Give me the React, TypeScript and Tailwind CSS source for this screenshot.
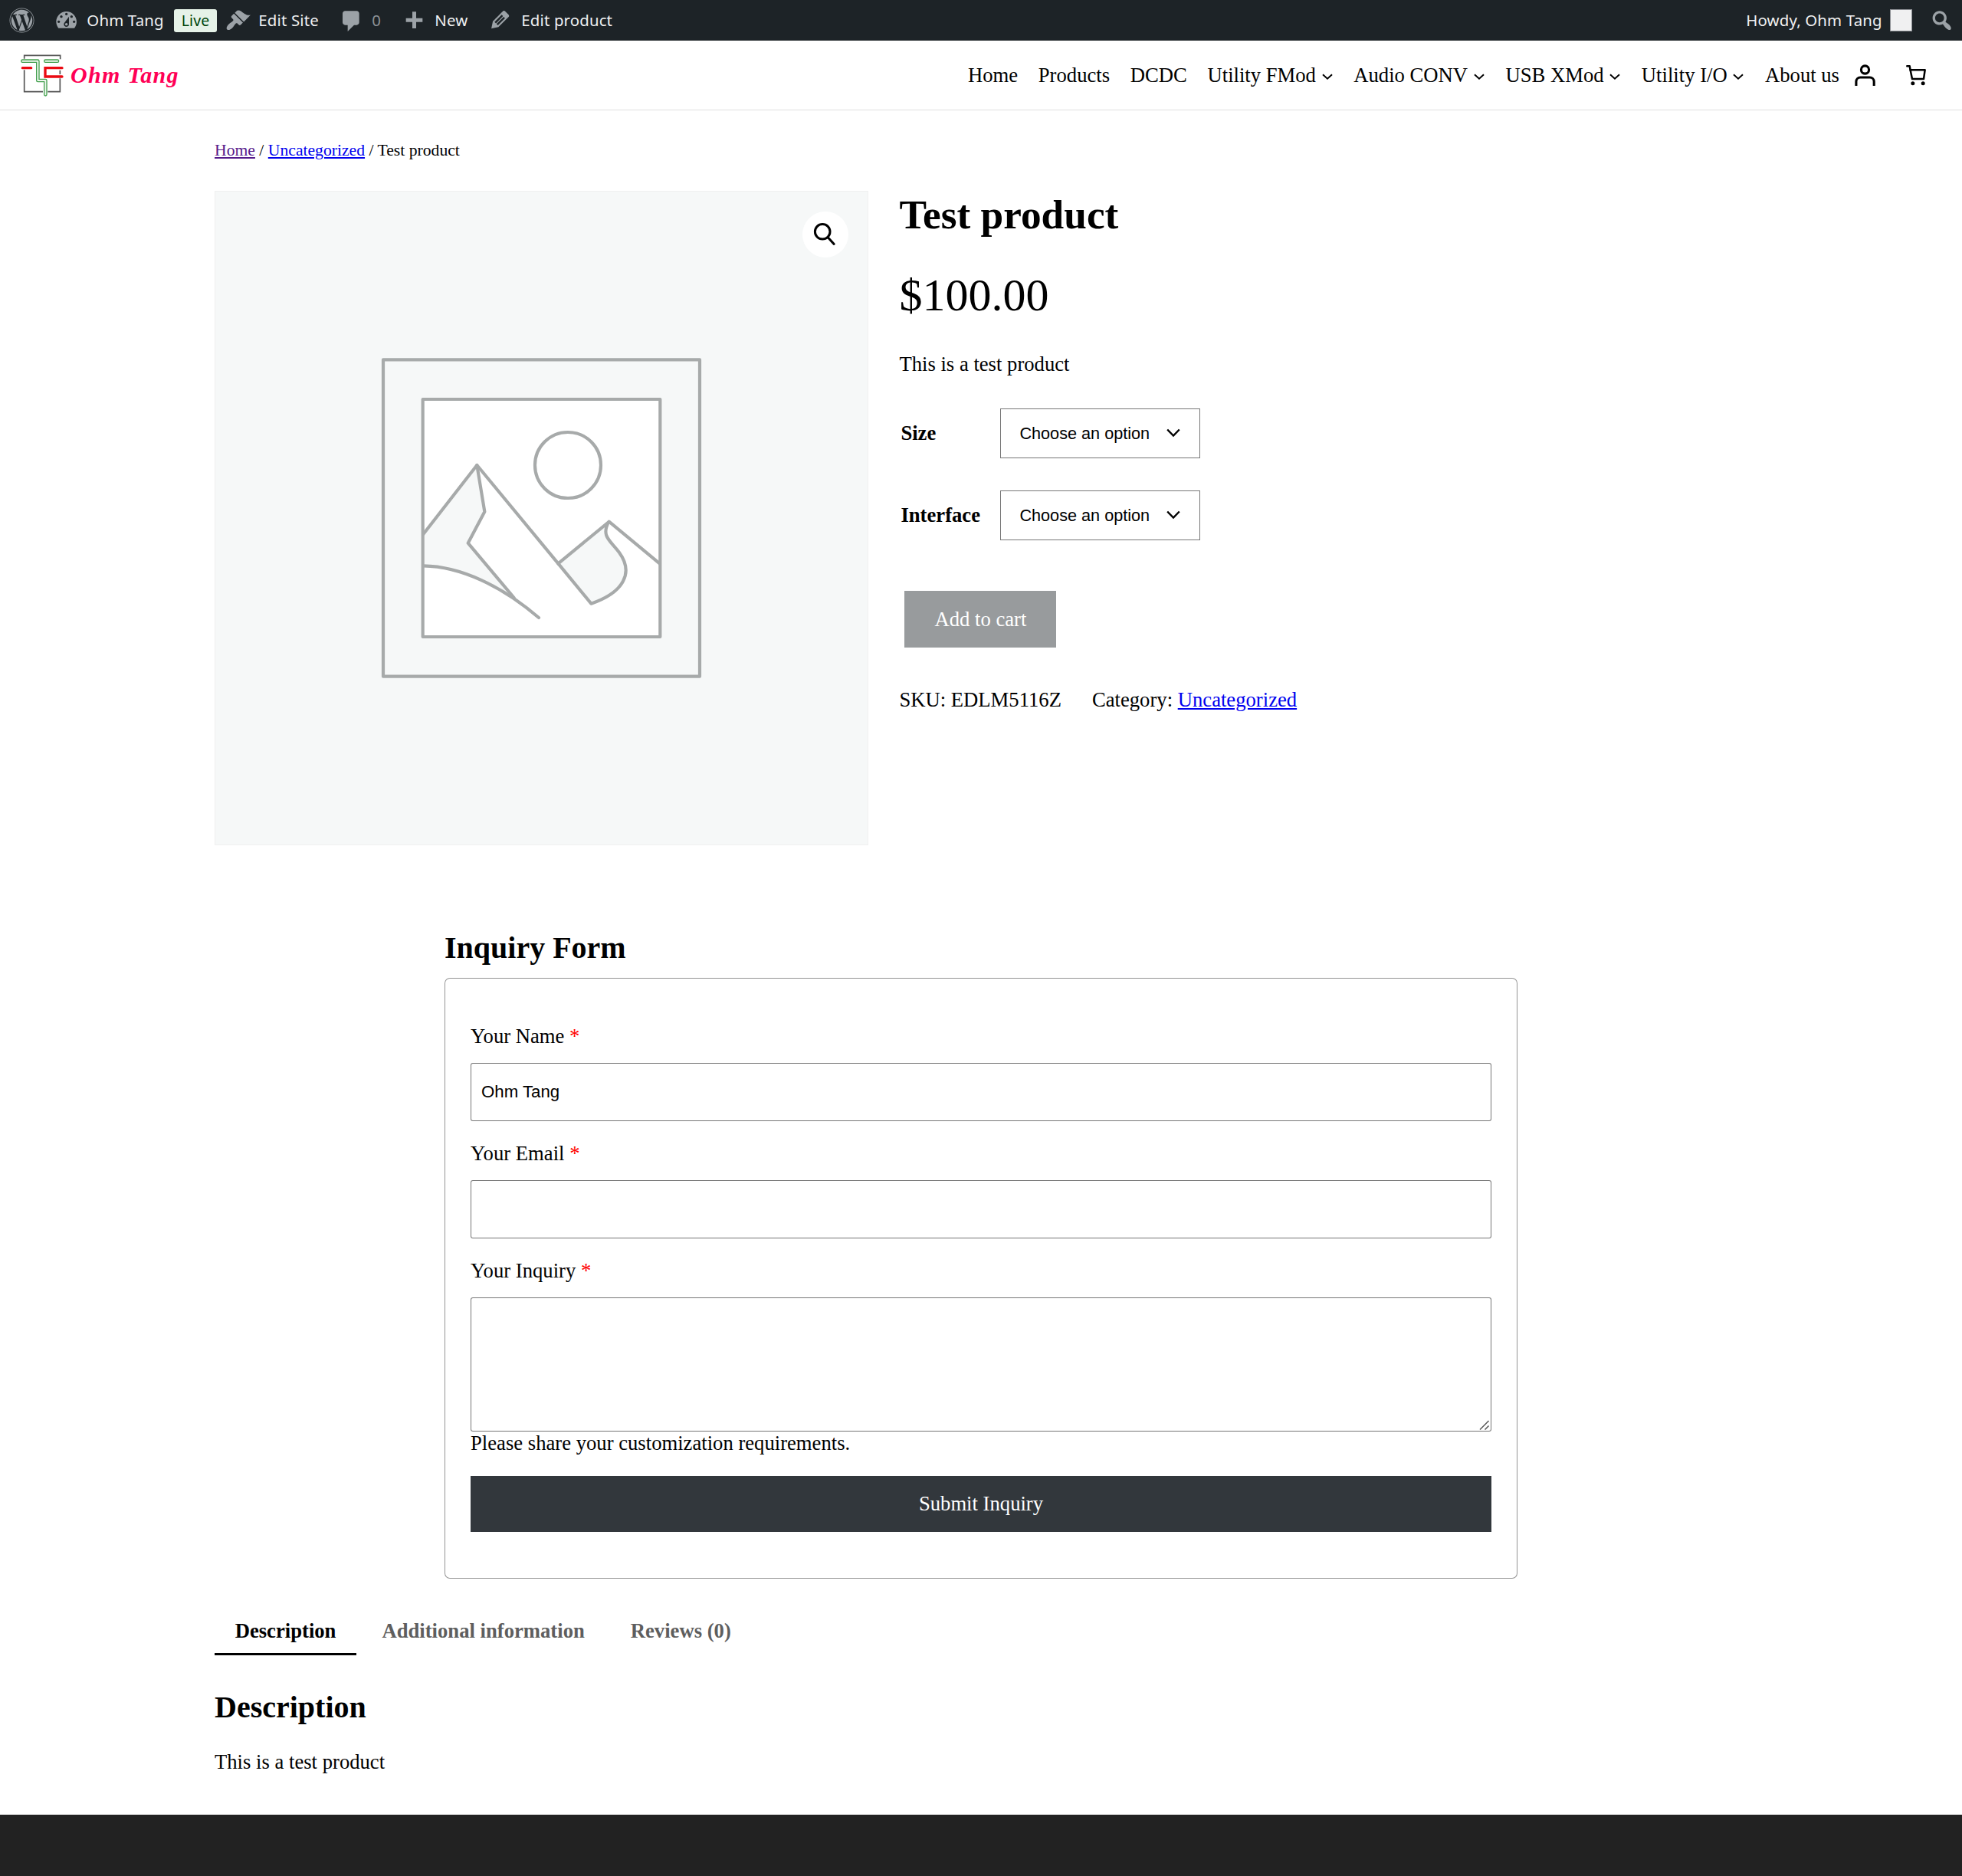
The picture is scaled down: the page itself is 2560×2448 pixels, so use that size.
import React from "react";
import { FaWordpress } from "react-icons/fa";

interface NavItem {
  label: string;
  hasMenu?: boolean;
}

const navItems: NavItem[] = [
  { label: "Home" },
  { label: "Products" },
  { label: "DCDC" },
  { label: "Utility FMod", hasMenu: true },
  { label: "Audio CONV", hasMenu: true },
  { label: "USB XMod", hasMenu: true },
  { label: "Utility I/O", hasMenu: true },
  { label: "About us" },
];

const options = ["Size", "Interface"];

const icons = {
  dashboard:
    "M3.76 16h12.48c1.1-1.37 1.76-3.11 1.76-5 0-4.42-3.58-8-8-8s-8 3.58-8 8c0 1.89.66 3.63 1.76 5zM10 4c.55 0 1 .45 1 1s-.45 1-1 1-1-.45-1-1 .45-1 1-1zM6 6c.55 0 1 .45 1 1s-.45 1-1 1-1-.45-1-1 .45-1 1-1zm8 0c.55 0 1 .45 1 1s-.45 1-1 1-1-.45-1-1 .45-1 1-1zm-5.37 5.55L12 7v6c0 1.1-.9 2-2 2s-2-.9-2-2c0-.57.24-1.08.63-1.45zM4 10c.55 0 1 .45 1 1s-.45 1-1 1-1-.45-1-1 .45-1 1-1zm12 0c.55 0 1 .45 1 1s-.45 1-1 1-1-.45-1-1 .45-1 1-1zm-5 3c0-.55-.45-1-1-1s-1 .45-1 1 .45 1 1 1 1-.45 1-1z",
  brush:
    "M14.48 11.06L7.41 3.99l1.5-1.5c.5-.56 2.3-.47 3.51.32 1.21.8 1.43 1.28 2.91 2.1 1.18.64 2.45 1.26 4.45.85zm-.71.71L6.7 4.7 4.93 6.47c-.39.39-.39 1.02 0 1.41l1.06 1.06c.39.39.39 1.03 0 1.42-.6.6-1.43 1.11-2.21 1.69-.35.26-.7.53-1.01.84C1.43 14.23.4 16.08 1.4 17.07c.99 1 2.84-.03 4.18-1.36.31-.31.58-.66.85-1.02.57-.78 1.08-1.61 1.69-2.21.39-.39 1.02-.39 1.41 0l1.06 1.06c.39.39 1.02.39 1.41 0z",
  comment:
    "M5 2h9c1.1 0 2 .9 2 2v7c0 1.1-.9 2-2 2h-2l-5 5v-5H5c-1.1 0-2-.9-2-2V4c0-1.1.9-2 2-2z",
  plus: "M17 7v3h-5v5H9v-5H4V7h5V2h3v5z",
  pencil:
    "M13.89 3.39l2.71 2.72c.46.46.42 1.24.03 1.64l-8.01 8.02-5.56 1.16 1.16-5.58s7.6-7.63 7.99-8.03c.39-.39 1.22-.39 1.68.07zm-2.73 2.79l-5.59 5.61 1.11 1.11 5.54-5.65zm-2.97 8.23l5.58-5.6-1.07-1.08-5.59 5.6z",
  search:
    "M12.14 4.18c1.87 1.87 2.11 4.75.72 6.89.12.1.22.21.36.31.2.16.47.36.81.59.34.24.56.39.66.47.42.31.73.57.94.78.32.32.6.65.84 1 .25.35.44.69.59 1.04.14.35.21.68.18 1-.02.32-.14.59-.36.81s-.49.34-.81.36c-.31.02-.65-.04-.99-.19-.35-.14-.7-.34-1.04-.59-.35-.24-.68-.52-1-.84-.21-.21-.47-.52-.77-.93-.1-.13-.25-.35-.47-.66-.22-.32-.4-.57-.56-.78-.16-.2-.29-.35-.44-.5-2.07 1.09-4.69.76-6.44-.98-2.14-2.15-2.14-5.64 0-7.78 2.15-2.15 5.63-2.15 7.78 0zm-1.41 6.36c1.36-1.37 1.36-3.58 0-4.95-1.37-1.37-3.59-1.37-4.95 0-1.37 1.37-1.37 3.58 0 4.95 1.36 1.37 3.58 1.37 4.95 0z",
};

const AdminIcon: React.FC<{ d: string; className?: string }> = ({
  d,
  className = "",
}) => (
  <svg
    viewBox="0 0 20 20"
    className={`w-[33.33px] h-[33.33px] shrink-0 fill-[#9ca2a7] ${className}`}
  >
    <path d={d} fillRule="evenodd" />
  </svg>
);

const AdminBar: React.FC = () => (
  <div className="h-[53px] bg-[#1d2327] text-[#f0f0f1] font-['Noto_Sans',sans-serif] text-[20.4px] tracking-[0.15px] leading-[53px] flex justify-between whitespace-nowrap">
    <div className="flex items-center">
      <FaWordpress className="ml-[12px] w-[33px] h-[33px] text-[#9ca2a7] shrink-0" />
      <div className="flex items-center ml-[25px] w-[213px]">
        <AdminIcon d={icons.dashboard} />
        <span className="ml-[10px] w-[114px]">Ohm Tang</span>
        <span className="w-[56px] h-[30px] leading-[29px] rounded-[3px] bg-[#e6f2e8] text-[#00450c] text-[19.5px] text-center">
          Live
        </span>
      </div>
      <div className="flex items-center ml-[11px] w-[148px]">
        <AdminIcon d={icons.brush} />
        <span className="ml-[10px]">Edit Site</span>
      </div>
      <div className="flex items-center w-[81px]">
        <AdminIcon d={icons.comment} className="mt-[3px]" />
        <span className="ml-[10px] text-[#8c9196]">0</span>
      </div>
      <div className="flex items-center w-[113px]">
        <AdminIcon d={icons.plus} className="mt-[4px]" />
        <span className="ml-[11px]">New</span>
      </div>
      <div className="flex items-center">
        <AdminIcon d={icons.pencil} className="-mt-[2px]" />
        <span className="ml-[11px]">Edit product</span>
      </div>
    </div>
    <div className="flex items-center pr-[10px]">
      <span>Howdy, Ohm Tang</span>
      <span className="ml-[10px] -mt-px w-[29px] h-[29px] bg-[#f0f0f1] border border-[#8c8f94]" />
      <AdminIcon d={icons.search} className="ml-[22px]" />
    </div>
  </div>
);

const Logo: React.FC = () => (
  <svg viewBox="78 210 174 170" className="w-[58px] h-[56.67px]" fill="none">
    <g stroke="#555" strokeWidth="5">
      <path d="M95 230V217H236V232" />
      <path d="M95 274V359H168M187 359H235V307M235 275v16" />
    </g>
    <g strokeLinecap="round" strokeLinejoin="round">
      <g stroke="#44a04f" strokeWidth="14">
        <path d="M88 239H148V315H178V370" />
        <path d="M178 239H225" />
      </g>
      <g stroke="#eff8ef" strokeWidth="6">
        <path d="M88 239H148V315H178V370" />
        <path d="M178 239H225" />
      </g>
      <g stroke="#ea0a12" strokeWidth="10">
        <path d="M88 266H122" />
        <path d="M243 266H177V300H243" strokeLinejoin="miter" />
      </g>
    </g>
  </svg>
);

const Header: React.FC = () => (
  <header className="h-[91px] border-b border-[#e0e0e0] flex items-center justify-between pl-[26px] pr-10">
    <div className="flex items-center">
      <Logo />
      <span className="ml-[8px] text-[30px] leading-none font-bold italic tracking-[1.3px] text-[#ff0055]">
        Ohm Tang
      </span>
    </div>
    <nav className="flex items-center">
      <ul className="flex gap-[26.67px] leading-[30px]">
        {navItems.map((item) => (
          <li key={item.label} className="flex items-center">
            {item.label}
            {item.hasMenu && (
              <svg
                viewBox="0 0 12 12"
                className="ml-[6.67px] w-4 h-4 mt-[3px]"
                fill="none"
                stroke="currentColor"
                strokeWidth="1.5"
              >
                <path d="M1.5 4L6 8l4.5-4" />
              </svg>
            )}
          </li>
        ))}
      </ul>
      <svg
        viewBox="0 0 40 40"
        className="ml-[13px] w-10 h-10"
        fill="none"
        stroke="currentColor"
        strokeWidth="3.1"
      >
        <circle cx="20.5" cy="13" r="5.1" />
        <path d="M8.9 34V28.5a5.5 5.5 0 0 1 5.5-5.5h12.3a5.5 5.5 0 0 1 5.5 5.5V34" />
      </svg>
      <svg viewBox="0 0 32 32" className="ml-[27px] w-10 h-10" fill="currentColor">
        <circle cx="12.667" cy="24.667" r="2" />
        <circle cx="23.333" cy="24.667" r="2" />
        <path
          fillRule="evenodd"
          d="M9.285 10.036C9.475 9.802 9.76 9.667 10.061 9.667H25.333C25.623 9.667 25.899 9.792 26.089 10.011C26.279 10.23 26.364 10.521 26.323 10.808L24.99 20.141C24.92 20.634 24.498 21 24 21H12C11.526 21 11.117 20.667 11.021 20.203L9.082 10.87C9.02 10.575 9.095 10.269 9.285 10.036ZM11.29 11.667L12.814 19H23.133L24.18 11.667H11.29Z"
        />
        <path d="M5.667 6.667C5.667 6.114 6.114 5.667 6.667 5.667H9.333C9.817 5.667 10.231 6.012 10.317 6.488L11.044 10.488C11.143 11.031 10.783 11.552 10.24 11.65C9.696 11.749 9.176 11.389 9.077 10.846L8.499 7.667H6.667C6.114 7.667 5.667 7.219 5.667 6.667Z" />
      </svg>
    </nav>
  </header>
);

const Gallery: React.FC = () => (
  <div className="relative w-[853px] h-[854px] bg-[#f6f8f8] border border-[#f0f0f0] shrink-0">
    <svg viewBox="1 1 851 852" className="w-full h-full">
      <g
        transform="translate(200 201) scale(.33333)"
        stroke="#a7aaaa"
        strokeWidth="12.5"
        strokeLinecap="round"
        strokeLinejoin="round"
        fill="none"
      >
        <rect x="60" y="58" width="1239" height="1240" />
        <rect x="215" y="213" width="929" height="930" fill="#fff" stroke="none" />
        <path
          d="M215 743L427 471L457 653L392 776L570 988C450 912 335 866 215 865Z"
          fill="#f6f8f8"
          stroke="none"
        />
        <rect x="215" y="213" width="929" height="930" />
        <circle cx="783" cy="471" r="129" />
        <path d="M745 856L874 1013C1005 968 1040 890 984 813C950 767 912 750 942 694Z" fill="#f6f8f8" />
        <path d="M217 741L427 471L745 856" />
        <path d="M944 692L1142 856" />
        <path d="M427 471L457 653L392 776L572 990" />
        <path d="M217 865C365 867 525 945 669 1068" />
      </g>
    </svg>
    <button className="absolute top-[26px] right-[25px] w-[60px] h-[60px] rounded-full bg-white">
      <svg
        viewBox="0 0 60 60"
        className="w-full h-full"
        fill="none"
        stroke="#000"
        strokeWidth="3"
      >
        <circle cx="26.2" cy="26.3" r="9.8" />
        <path d="M33 33.5l8.2 9" strokeLinecap="round" />
      </svg>
    </button>
  </div>
);

const Summary: React.FC = () => (
  <div className="ml-[40.4px]">
    <h1 className="text-[53.33px] leading-[62px] font-bold">Test product</h1>
    <p className="mt-[39px] text-[60px] leading-[70px]">$100.00</p>
    <p className="mt-10 leading-[30px]">This is a test product</p>
    <div className="mt-[43px] flex flex-col gap-[42px]">
      {options.map((name) => (
        <div key={name} className="flex items-center h-[65px]">
          <label className="pl-[2px] pb-[2px] w-[132px] font-bold">{name}</label>
          <div className="w-[261px] h-full border border-[#767676] flex items-center justify-between pl-6 pr-[25px] font-['Liberation_Sans',sans-serif] text-[21.67px]">
            <span className="pt-[2px]">Choose an option</span>
            <svg
              viewBox="0 0 18 12"
              className="w-[18px] h-3 -mt-[1px]"
              fill="none"
              stroke="#000"
              strokeWidth="2.4"
            >
              <path d="M1.2 1.5L9 9.6l7.8-8.1" />
            </svg>
          </div>
        </div>
      ))}
    </div>
    <button className="mt-[66px] ml-[7px] block w-[198px] h-[74px] bg-[#989b9d] text-white">
      Add to cart
    </button>
    <div className="mt-[53px] flex gap-10 leading-[30px]">
      <span>SKU: EDLM5116Z</span>
      <span>
        Category:{" "}
        <a className="text-[#0000ee] underline">Uncategorized</a>
      </span>
    </div>
  </div>
);

const FieldLabel: React.FC<{ text: string }> = ({ text }) => (
  <label className="block mt-[27px] mb-[19px] leading-[31px]">
    {text} <span className="text-[#ff0000]">*</span>
  </label>
);

const InquiryForm: React.FC = () => (
  <section className="w-[1400px] mx-auto mt-[110px]">
    <h2 className="text-[40px] leading-[47px] font-bold">Inquiry Form</h2>
    <form className="mt-4 h-[784px] shadow-[inset_0_0_0_1px_#949494] rounded-[7px] px-[34px] pt-[34px]">
      <FieldLabel text="Your Name" />
      <input
        type="text"
        defaultValue="Ohm Tang"
        className="block w-full h-[76px] shadow-[inset_0_0_0_1px_#767676] rounded-[3px] px-[14px] font-['Liberation_Sans',sans-serif] text-[22.22px]"
      />
      <FieldLabel text="Your Email" />
      <input
        type="email"
        className="block w-full h-[76px] shadow-[inset_0_0_0_1px_#767676] rounded-[3px] px-[14px]"
      />
      <FieldLabel text="Your Inquiry" />
      <div className="relative">
        <textarea className="block w-full h-[175px] shadow-[inset_0_0_0_1px_#767676] rounded-[3px] resize-none" />
        <svg
          viewBox="0 0 14 14"
          className="absolute right-[2px] bottom-[1px] w-[14px] h-[14px]"
          stroke="#555"
          strokeWidth="1.5"
        >
          <path d="M1 12.5L12.5 1M7.5 12.5L12.5 7.5" />
        </svg>
      </div>
      <p className="leading-[30px]">Please share your customization requirements.</p>
      <button
        type="button"
        className="mt-7 pb-[2px] block w-full h-[73px] bg-[#32373c] text-white"
      >
        Submit Inquiry
      </button>
    </form>
  </section>
);

const Tabs: React.FC = () => (
  <section className="mt-[39px]">
    <ul className="flex gap-[6.67px] font-bold leading-[58px]">
      <li className="px-[26.67px] border-b-[3px] border-black">Description</li>
      <li className="px-[26.67px] text-[#5e5e5e]">Additional information</li>
      <li className="px-[26.67px] text-[#5e5e5e]">Reviews (0)</li>
    </ul>
    <h2 className="mt-11 text-[40px] leading-[47px] font-bold">Description</h2>
    <p className="mt-[33px] leading-[30px]">This is a test product</p>
  </section>
);

const App: React.FC = () => {
  return (
    <div className="w-[2560px] h-[2448px] overflow-hidden flex flex-col bg-white text-black font-['Liberation_Serif',serif] text-[26.67px]">
      <AdminBar />
      <Header />
      <main className="w-[2000px] mx-auto">
        <div className="mt-[37px] mb-[38px] text-[21.67px] leading-[30px]">
          <a className="text-[#551a8b] underline">Home</a> /{" "}
          <a className="text-[#0000ee] underline">Uncategorized</a> / Test
          product
        </div>
        <div className="flex">
          <Gallery />
          <Summary />
        </div>
        <InquiryForm />
        <Tabs />
      </main>
      <footer className="mt-[54px] flex-1 bg-[#222]" />
    </div>
  );
};

export default App;
